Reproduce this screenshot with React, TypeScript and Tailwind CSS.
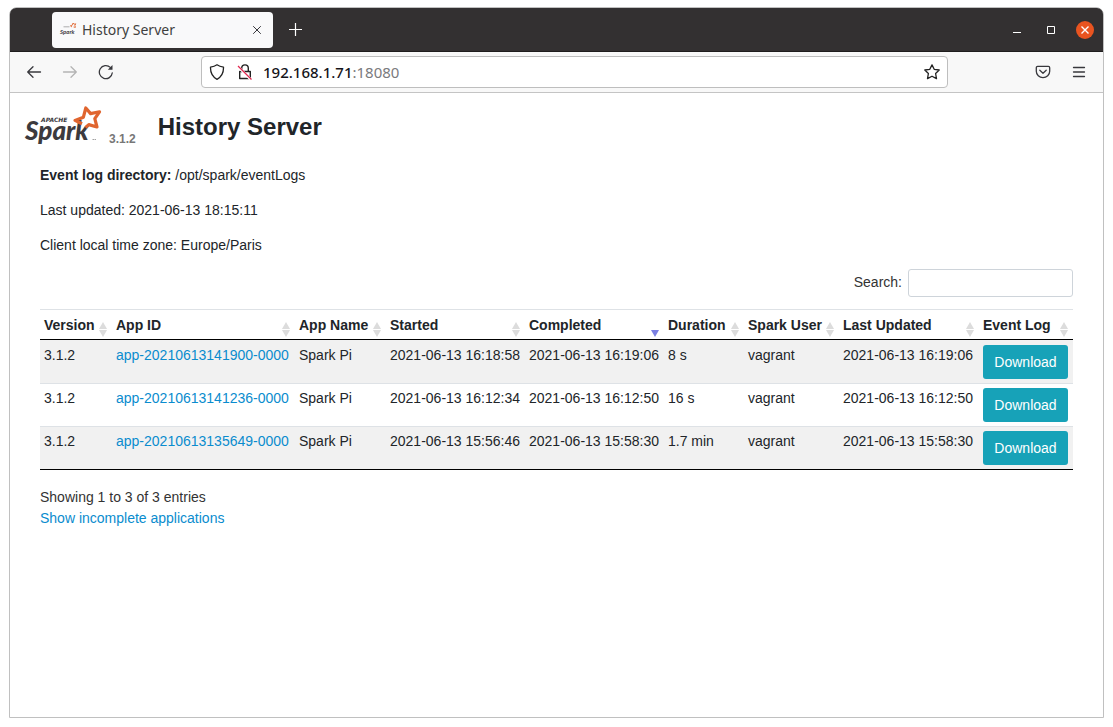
import React from 'react';

type App = {
  version: string;
  id: string;
  name: string;
  started: string;
  completed: string;
  duration: string;
  user: string;
  updated: string;
};

const apps: App[] = [
  { version: '3.1.2', id: 'app-20210613141900-0000', name: 'Spark Pi', started: '2021-06-13 16:18:58', completed: '2021-06-13 16:19:06', duration: '8 s', user: 'vagrant', updated: '2021-06-13 16:19:06' },
  { version: '3.1.2', id: 'app-20210613141236-0000', name: 'Spark Pi', started: '2021-06-13 16:12:34', completed: '2021-06-13 16:12:50', duration: '16 s', user: 'vagrant', updated: '2021-06-13 16:12:50' },
  { version: '3.1.2', id: 'app-20210613135649-0000', name: 'Spark Pi', started: '2021-06-13 15:56:46', completed: '2021-06-13 15:58:30', duration: '1.7 min', user: 'vagrant', updated: '2021-06-13 15:58:30' },
];

const columns = [
  { label: 'Version', width: 'w-[72px]' },
  { label: 'App ID', width: 'w-[183px]' },
  { label: 'App Name', width: 'w-[91px]' },
  { label: 'Started', width: 'w-[139px]' },
  { label: 'Completed', width: 'w-[139px]', sorted: true },
  { label: 'Duration', width: 'w-[80px]' },
  { label: 'Spark User', width: 'w-[95px]' },
  { label: 'Last Updated', width: 'w-[140px]' },
  { label: 'Event Log', width: 'w-[94px]' },
];

function SparkLogo({ className }: { className: string }) {
  return (
    <svg viewBox="0 0 78 40" className={className} overflow="visible" role="img" aria-label="Apache Spark">
      <text x="16" y="16" fontSize="6" fontWeight="700" fontStyle="italic" fontFamily="DejaVu Sans, sans-serif" fill="#3c3a3e">APACHE</text>
      <text x="0" y="34" fontSize="26" fontWeight="900" fontStyle="italic" fontFamily="Lato, sans-serif" fill="#3c3a3e">Spark</text>
      <path
        d="M57 17.800L50 14.400L58.400 11.200L60.800 2L65.600 7.600L74.500 5.800L69.800 12.700L72 21L63.800 18.600L60.500 21.500"
        fill="none"
        stroke="#e0652f"
        strokeWidth="3.200"
        strokeLinejoin="round"
      />
      <path d="M67.500 33.500h1.500M69.500 33.500h1.500" stroke="#8a8a8a" strokeWidth="0.8" />
    </svg>
  );
}

function SortIcon({ sorted }: { sorted?: boolean }) {
  return (
    <svg viewBox="0 0 8 15" className="h-[15px] w-2 shrink-0" aria-hidden="true">
      {!sorted && <path d="M0 7L4 0L8 7Z" fill="#dcdcdc" />}
      <path d="M0 8H8L4 15Z" fill={sorted ? '#7b80e2' : '#dcdcdc'} />
    </svg>
  );
}

function ToolButton({ label, children, muted }: { label: string; children: React.ReactNode; muted?: boolean }) {
  return (
    <button
      type="button"
      aria-label={label}
      disabled={muted}
      className={`flex size-9 shrink-0 items-center justify-center ${muted ? 'text-[#b4b4b4]' : 'text-[#38383d]'}`}
    >
      <svg viewBox="0 0 16 16" className="size-4" fill="none" stroke="currentColor" strokeWidth="1.3" strokeLinecap="round" strokeLinejoin="round">
        {children}
      </svg>
    </button>
  );
}

function TabBar() {
  return (
    <header className="flex h-11 items-center rounded-t-md border-b border-[#1f1d1d] bg-[#333031] pr-[9px] pl-[42px]">
      <div className="flex h-9 w-[221px] items-center rounded bg-[#f9f9fa] pr-[10px] pl-2">
        <svg viewBox="0 0 16 16" className="size-4 shrink-0" overflow="visible" aria-hidden="true">
          <path d="M3.500 4.800h6" stroke="#9a9a9a" strokeWidth="0.8" />
          <text x="0" y="11.500" fontSize="6" fontWeight="700" fontStyle="italic" fontFamily="Lato, sans-serif" fill="#3c3a3e">Spark</text>
          <path d="M12 5L10.400 3.800L12.500 3L13 1L14 2.200L15.800 1.800L14.900 3.400L15.400 5.400L13.600 5" fill="none" stroke="#e0652f" strokeWidth="0.9" />
        </svg>
        <span className="ml-[6px] flex-1 font-['Noto_Sans',sans-serif] text-sm text-[#3f3f3f]">History Server</span>
        <button type="button" aria-label="Close tab" className="text-[#38383d]">
          <svg viewBox="0 0 12 12" className="size-3" stroke="currentColor" strokeWidth="1">
            <path d="M2.200 2.200l7.600 7.600M9.800 2.200l-7.600 7.600" />
          </svg>
        </button>
      </div>
      <button type="button" aria-label="New tab" className="ml-4 text-white">
        <svg viewBox="0 0 13 13" className="size-[13px]" stroke="currentColor" strokeWidth="1.2">
          <path d="M6.500 0v13M0 6.500h13" />
        </svg>
      </button>
      <div className="ml-auto flex items-center gap-4 text-white">
        <button type="button" aria-label="Minimize">
          <svg viewBox="0 0 18 18" className="size-[18px]" stroke="currentColor">
            <path d="M5 11.5h8" />
          </svg>
        </button>
        <button type="button" aria-label="Maximize">
          <svg viewBox="0 0 18 18" className="size-[18px]" stroke="currentColor" fill="none">
            <path d="M5.500 5.500h7v7h-7z" />
          </svg>
        </button>
        <button type="button" aria-label="Close window" className="rounded-full bg-[#e95420]">
          <svg viewBox="0 0 18 18" className="size-[18px]" stroke="currentColor" strokeWidth="1.4">
            <path d="M5.500 5.500l7 7M12.500 5.500l-7 7" />
          </svg>
        </button>
      </div>
    </header>
  );
}

function Toolbar() {
  return (
    <nav className="flex h-[41px] items-center border-b border-[#c4c4c4] bg-[#f8f8f8] px-[6px]">
      <ToolButton label="Back">
        <path d="M14.500 8H1.700M7 2.700L1.700 8L7 13.300" />
      </ToolButton>
      <ToolButton label="Forward" muted>
        <path d="M1.500 8h12.800M9 2.700L14.300 8L9 13.300" />
      </ToolButton>
      <ToolButton label="Reload">
        <path d="M14.300 8.800A6.500 6.500 0 1 1 12.300 3.400" />
        <path d="M14.500 1v4.700H9.800Z" fill="currentColor" stroke="none" />
      </ToolButton>
      <div className="mx-[77px] flex h-8 min-w-0 flex-1 items-center rounded border border-[#bebebe] bg-white px-[7px] font-['Noto_Sans',sans-serif] text-[15px] text-[#15141a]">
        <svg viewBox="0 0 16 16" className="size-4 shrink-0" fill="none" stroke="#222" strokeWidth="1.3" strokeLinejoin="round" aria-hidden="true">
          <path d="M8 .8C6 2.300 3.500 2.900 1.500 3.100C1.300 8.600 3.200 12.800 8 15.300C12.800 12.800 14.700 8.600 14.500 3.100C12.500 2.900 10 2.300 8 .8Z" />
        </svg>
        <svg viewBox="0 0 16 16" className="ml-3 size-4 shrink-0" fill="none" stroke="#222" strokeWidth="1.4" aria-hidden="true">
          <path d="M4.700 7.500V4.200a3.300 3.300 0 0 1 6.600 0V7.500M2.700 7.500h10.600v7H2.700z" strokeLinejoin="round" />
          <path d="M1 2.700L13.700 15.400" stroke="#fff" strokeWidth="2.600" />
          <path d="M1 2L14.500 15.500" stroke="#e22850" strokeWidth="1.300" />
        </svg>
        <input
          type="text"
          aria-label="Address"
          defaultValue="192.168.1.71"
          className="ml-[10px] field-sizing-content bg-transparent p-0 font-medium outline-none"
        />
        <span className="flex-1 text-[#7a7a7d]">:18080</span>
        <button type="button" aria-label="Bookmark this page">
          <svg viewBox="0 0 16 16" className="size-4" fill="none" stroke="#222" strokeWidth="1.300" strokeLinejoin="round">
            <path d="M8 .9L10.200 5.300L15.200 6L11.600 9.500L12.500 14.600L8 12.200L3.500 14.600L4.400 9.500L.8 6L5.800 5.300Z" />
          </svg>
        </button>
      </div>
      <ToolButton label="Save to Pocket">
        <path d="M2.600 2.400h10.800a1.300 1.300 0 0 1 1.300 1.300V7.300a6.700 6.400 0 0 1-13.400 0V3.700a1.300 1.300 0 0 1 1.300-1.300ZM4.800 6.300L8 9.300L11.200 6.300" />
      </ToolButton>
      <ToolButton label="Menu">
        <path d="M2.500 3.500h11M2.500 8h11M2.500 12.500h11" />
      </ToolButton>
    </nav>
  );
}

function AppTable() {
  return (
    <table className="w-full table-fixed border-separate border-spacing-0 border-b border-black text-left whitespace-nowrap">
      <colgroup>
        {columns.map((c) => (
          <col key={c.label} className={c.width} />
        ))}
      </colgroup>
      <thead>
        <tr>
          {columns.map((c) => (
            <th key={c.label} scope="col" aria-sort={c.sorted ? 'descending' : undefined} className="border-t border-b border-t-[#dee2e6] border-b-black p-0">
              <button type="button" className="flex h-[29px] w-full items-end justify-between pr-[5px] pb-[2px] pl-1 font-bold">
                <span className="pb-[1px]">{c.label}</span>
                <SortIcon sorted={c.sorted} />
              </button>
            </th>
          ))}
        </tr>
      </thead>
      <tbody className="[&_td]:border-t [&_td]:border-[#dee2e6] [&_td]:px-1 [&_td]:py-1 [&_td]:align-top [&_tr:first-child_td]:border-transparent [&_tr:nth-child(odd)]:bg-[#f1f1f1]">
        {apps.map((a) => (
          <tr key={a.id}>
            <td>{a.version}</td>
            <td>
              <a href="#app" className="text-[#0a8cce]">{a.id}</a>
            </td>
            <td>{a.name}</td>
            <td>{a.started}</td>
            <td>{a.completed}</td>
            <td>{a.duration}</td>
            <td>{a.user}</td>
            <td>{a.updated}</td>
            <td>
              <a href="#download" className="mr-[1px] flex h-[34px] items-center justify-center rounded-[3px] bg-[#17a2b8] text-white">Download</a>
            </td>
          </tr>
        ))}
      </tbody>
    </table>
  );
}

export default function App() {
  return (
    <div className="flex min-h-screen bg-white px-[9px] pt-[7px] pb-[9px]">
      <div className="flex min-w-0 flex-1 flex-col rounded-t-lg border border-[#c0c0c0]">
        <TabBar />
        <Toolbar />
        <main className="flex-1 px-[30px] pt-[13px] font-['Liberation_Sans',sans-serif] text-sm leading-[21px] text-[#212529]">
          <div className="-ml-[15px] flex h-10 items-end">
            <SparkLogo className="h-10 w-[78px]" />
            <span className="ml-[6px] text-xs leading-[14px] font-bold text-[#777]">3.1.2</span>
            <h1 className="ml-[22px] self-center pt-[2px] text-2xl leading-7 font-bold">History Server</h1>
          </div>
          <div className="mt-[19px] flex flex-col gap-[14px]">
            <p>
              <strong>Event log directory:</strong> /opt/spark/eventLogs
            </p>
            <p>Last updated: 2021-06-13 18:15:11</p>
            <p>Client local time zone: Europe/Paris</p>
          </div>
          <div className="mt-[13px] mb-3 flex items-start justify-end gap-[6px] text-[#333]">
            <label htmlFor="search" className="leading-[26px]">Search:</label>
            <input id="search" type="search" className="h-7 w-[165px] rounded-[3px] border border-[#ced4da] bg-white px-2" />
          </div>
          <AppTable />
          <p className="mt-[17px] text-[#333]">Showing 1 to 3 of 3 entries</p>
          <a href="#incomplete" className="text-[#0a8cce]">Show incomplete applications</a>
        </main>
      </div>
    </div>
  );
}
